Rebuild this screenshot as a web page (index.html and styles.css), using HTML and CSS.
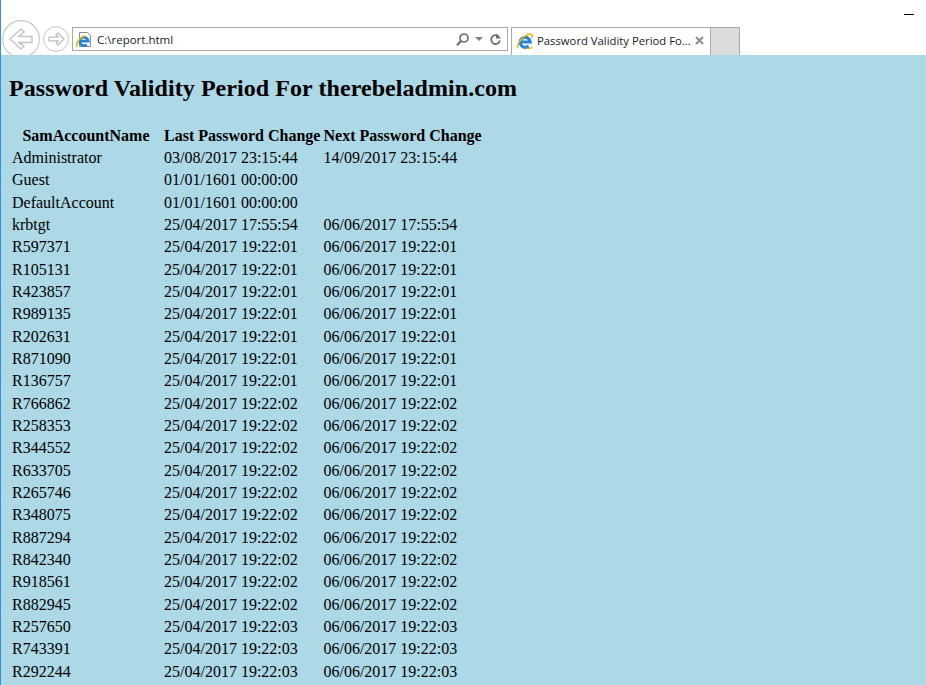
FILE: index.html
```html
<!DOCTYPE html>
<html lang="en">
<head>
<meta charset="utf-8">
<title>Password Validity Period For therebeladmin.com</title>
<link rel="stylesheet" href="styles.css">
</head>
<body>
<div class="window">
  <header class="chrome">
    <div class="caption"><span class="minimize"></span></div>
    <div class="toolbar">
      <button class="nav back" aria-label="Back">
        <svg viewBox="0 0 38 38" width="38" height="38"><circle cx="19" cy="19" r="18.400" fill="#fff" stroke="#c6c6c6" stroke-width="1.100"/><path d="M8 19 19 9l3 3-5.500 4.500H30v6H16.500L22 26l-3 3z" fill="#fff" stroke="#c6c6c6" stroke-width="1.500" stroke-linejoin="round"/></svg>
      </button>
      <button class="nav forward" aria-label="Forward">
        <svg viewBox="0 0 26 26" width="26" height="26"><circle cx="13" cy="13" r="12.400" fill="#fff" stroke="#c6c6c6" stroke-width="1"/><path d="M21 13 15 7l-2 2 2.500 2.200H6v3.600h9.500L13 17l2 2z" fill="#fff" stroke="#bdbdbd" stroke-width="1.300" stroke-linejoin="round"/></svg>
      </button>
      <div class="address">
        <svg class="page-icon" viewBox="0 0 16 16" width="16" height="16"><path d="M3.500.5h8l3 3v11h-11z" fill="#fff" stroke="#8f8f8f"/><path d="M3.800 9.200h8.400A4.200 4.200 0 1 0 10.800 12.600" fill="none" stroke="#2486d8" stroke-width="2.700"/><path d="M.8 15.200C-.5 12 3.500 5.500 8.500 3.800" fill="none" stroke="#f4b400" stroke-width="1.600"/></svg>
        <span class="url">C:\report.html</span>
        <span class="addr-tools">
          <svg viewBox="0 0 13 13" width="13" height="13"><circle cx="8" cy="5" r="4" fill="none" stroke="#6e6e6e" stroke-width="1.700"/><path d="M5.200 7.800 1 12.300" stroke="#6e6e6e" stroke-width="2.200" fill="none"/></svg>
          <svg class="caret" viewBox="0 0 8 4" width="8" height="4"><path d="M0 0h8L4 4z" fill="#808080"/></svg>
          <svg class="reload" viewBox="0 0 11 13" width="11" height="13"><path d="M9 3.800A4.400 4.400 0 1 0 9.900 7.500" fill="none" stroke="#6e6e6e" stroke-width="1.800"/><path d="M6 .5v5h5z" fill="#6e6e6e"/></svg>
        </span>
      </div>
      <div class="tab">
        <svg class="tab-icon" viewBox="0 0 16 16" width="16" height="16"><path d="M3.200 9h10A5 5 0 1 0 11.600 13" fill="none" stroke="#2486d8" stroke-width="3.200"/><path d="M.9 15C-1 12.500 6 1.500 13.500.9c2.300-.1 2 2.400 1 4.200" fill="none" stroke="#f4b400" stroke-width="1.500"/><path d="M9 15c2.500.7 5.500.7 6.300-1.200" fill="none" stroke="#f4b400" stroke-width="1.200"/></svg>
        <span class="tab-title">Password Validity Period Fo...</span>
        <svg class="tab-close" viewBox="0 0 9 9" width="9" height="9"><path d="M1 1l7 7M8 1 1 8" stroke="#8c8c8c" stroke-width="2"/></svg>
      </div>
      <div class="new-tab"></div>
    </div>
  </header>
  <main class="page">
    <h1>Password Validity Period For therebeladmin.com</h1>
    <table>
      <thead>
        <tr><th>SamAccountName</th><th>Last Password Change</th><th>Next Password Change</th></tr>
      </thead>
      <tbody>
        <tr><td>Administrator</td><td>03/08/2017 23:15:44</td><td>14/09/2017 23:15:44</td></tr>
        <tr><td>Guest</td><td>01/01/1601 00:00:00</td><td></td></tr>
        <tr><td>DefaultAccount</td><td>01/01/1601 00:00:00</td><td></td></tr>
        <tr><td>krbtgt</td><td>25/04/2017 17:55:54</td><td>06/06/2017 17:55:54</td></tr>
        <tr><td>R597371</td><td>25/04/2017 19:22:01</td><td>06/06/2017 19:22:01</td></tr>
        <tr><td>R105131</td><td>25/04/2017 19:22:01</td><td>06/06/2017 19:22:01</td></tr>
        <tr><td>R423857</td><td>25/04/2017 19:22:01</td><td>06/06/2017 19:22:01</td></tr>
        <tr><td>R989135</td><td>25/04/2017 19:22:01</td><td>06/06/2017 19:22:01</td></tr>
        <tr><td>R202631</td><td>25/04/2017 19:22:01</td><td>06/06/2017 19:22:01</td></tr>
        <tr><td>R871090</td><td>25/04/2017 19:22:01</td><td>06/06/2017 19:22:01</td></tr>
        <tr><td>R136757</td><td>25/04/2017 19:22:01</td><td>06/06/2017 19:22:01</td></tr>
        <tr><td>R766862</td><td>25/04/2017 19:22:02</td><td>06/06/2017 19:22:02</td></tr>
        <tr><td>R258353</td><td>25/04/2017 19:22:02</td><td>06/06/2017 19:22:02</td></tr>
        <tr><td>R344552</td><td>25/04/2017 19:22:02</td><td>06/06/2017 19:22:02</td></tr>
        <tr><td>R633705</td><td>25/04/2017 19:22:02</td><td>06/06/2017 19:22:02</td></tr>
        <tr><td>R265746</td><td>25/04/2017 19:22:02</td><td>06/06/2017 19:22:02</td></tr>
        <tr><td>R348075</td><td>25/04/2017 19:22:02</td><td>06/06/2017 19:22:02</td></tr>
        <tr><td>R887294</td><td>25/04/2017 19:22:02</td><td>06/06/2017 19:22:02</td></tr>
        <tr><td>R842340</td><td>25/04/2017 19:22:02</td><td>06/06/2017 19:22:02</td></tr>
        <tr><td>R918561</td><td>25/04/2017 19:22:02</td><td>06/06/2017 19:22:02</td></tr>
        <tr><td>R882945</td><td>25/04/2017 19:22:02</td><td>06/06/2017 19:22:02</td></tr>
        <tr><td>R257650</td><td>25/04/2017 19:22:03</td><td>06/06/2017 19:22:03</td></tr>
        <tr><td>R743391</td><td>25/04/2017 19:22:03</td><td>06/06/2017 19:22:03</td></tr>
        <tr><td>R292244</td><td>25/04/2017 19:22:03</td><td>06/06/2017 19:22:03</td></tr>
      </tbody>
    </table>
  </main>
</div>
</body>
</html>
```
FILE: styles.css
```css
* { box-sizing: border-box; }
html, body { margin: 0; height: 100%; overflow: hidden; background: #fff; }
.window {
  height: 685px;
  display: flex;
  flex-direction: column;
  border-left: 1px solid #2b90e8;
}
.chrome { height: 55px; overflow: hidden; background: #fff; flex: none; display: flex; flex-direction: column; font-family: "Open Sans", "Noto Sans", sans-serif; }
.caption { height: 15px; flex: none; display: flex; justify-content: flex-end; padding: 14px 12px 0 0; }
.minimize { width: 10px; height: 1px; background: #000; }
.toolbar { height: 40px; flex: none; display: flex; align-items: flex-start; }
.nav { border: 0; padding: 0; background: none; display: block; flex: none; }
.nav svg { display: block; }
.back { width: 38px; height: 38px; margin: 5px 0 0 1px; }
.forward { width: 26px; height: 26px; margin: 11px 0 0 3px; }
.address {
  width: 436px; height: 24px; margin: 12px 0 0 3px; flex: none;
  border: 1px solid #a9a9a9; display: flex; align-items: center; padding: 0 6px 0 3px;
}
.page-icon { flex: none; margin-top: 1px; }
.url { font-size: 11.500px; color: #1c1c1c; margin-left: 5px; flex: 1; }
.addr-tools { display: flex; align-items: center; gap: 6px; }
.reload { margin-left: 1px; }
.tab {
  width: 200px; height: 28px; margin: 12px 0 0 3px; flex: none;
  border: 1px solid #a9a9a9; border-bottom: 0; display: flex; align-items: center; padding: 0 6px 2px 5px;
}
.tab-icon { flex: none; }
.tab-title { font-size: 11.300px; color: #1c1c1c; margin-left: 4px; flex: 1; white-space: nowrap; }
.new-tab { width: 29px; height: 28px; margin-top: 12px; flex: none; background: #dcdcdc; border: 1px solid #a9a9a9; border-width: 1px 1px 0 0; }
.page { flex: 1; min-height: 0; overflow: hidden; background: #add8e6; padding: 7px 0 0 8px; color: #000; font-family: "Liberation Serif", "Times New Roman", serif; font-size: 16px; }
h1 { font-size: 24px; line-height: 28px; margin: 12px 0 21.500px; font-weight: bold; letter-spacing: .065px; }
table { border-spacing: 2px; }
th, td { padding: 1px; line-height: 18.350px; }
th { text-align: center; font-weight: bold; }
td { text-align: left; }
th:first-child { width: 150px; }
th:nth-child(2), td:nth-child(2) { padding-right: 0; }
```
